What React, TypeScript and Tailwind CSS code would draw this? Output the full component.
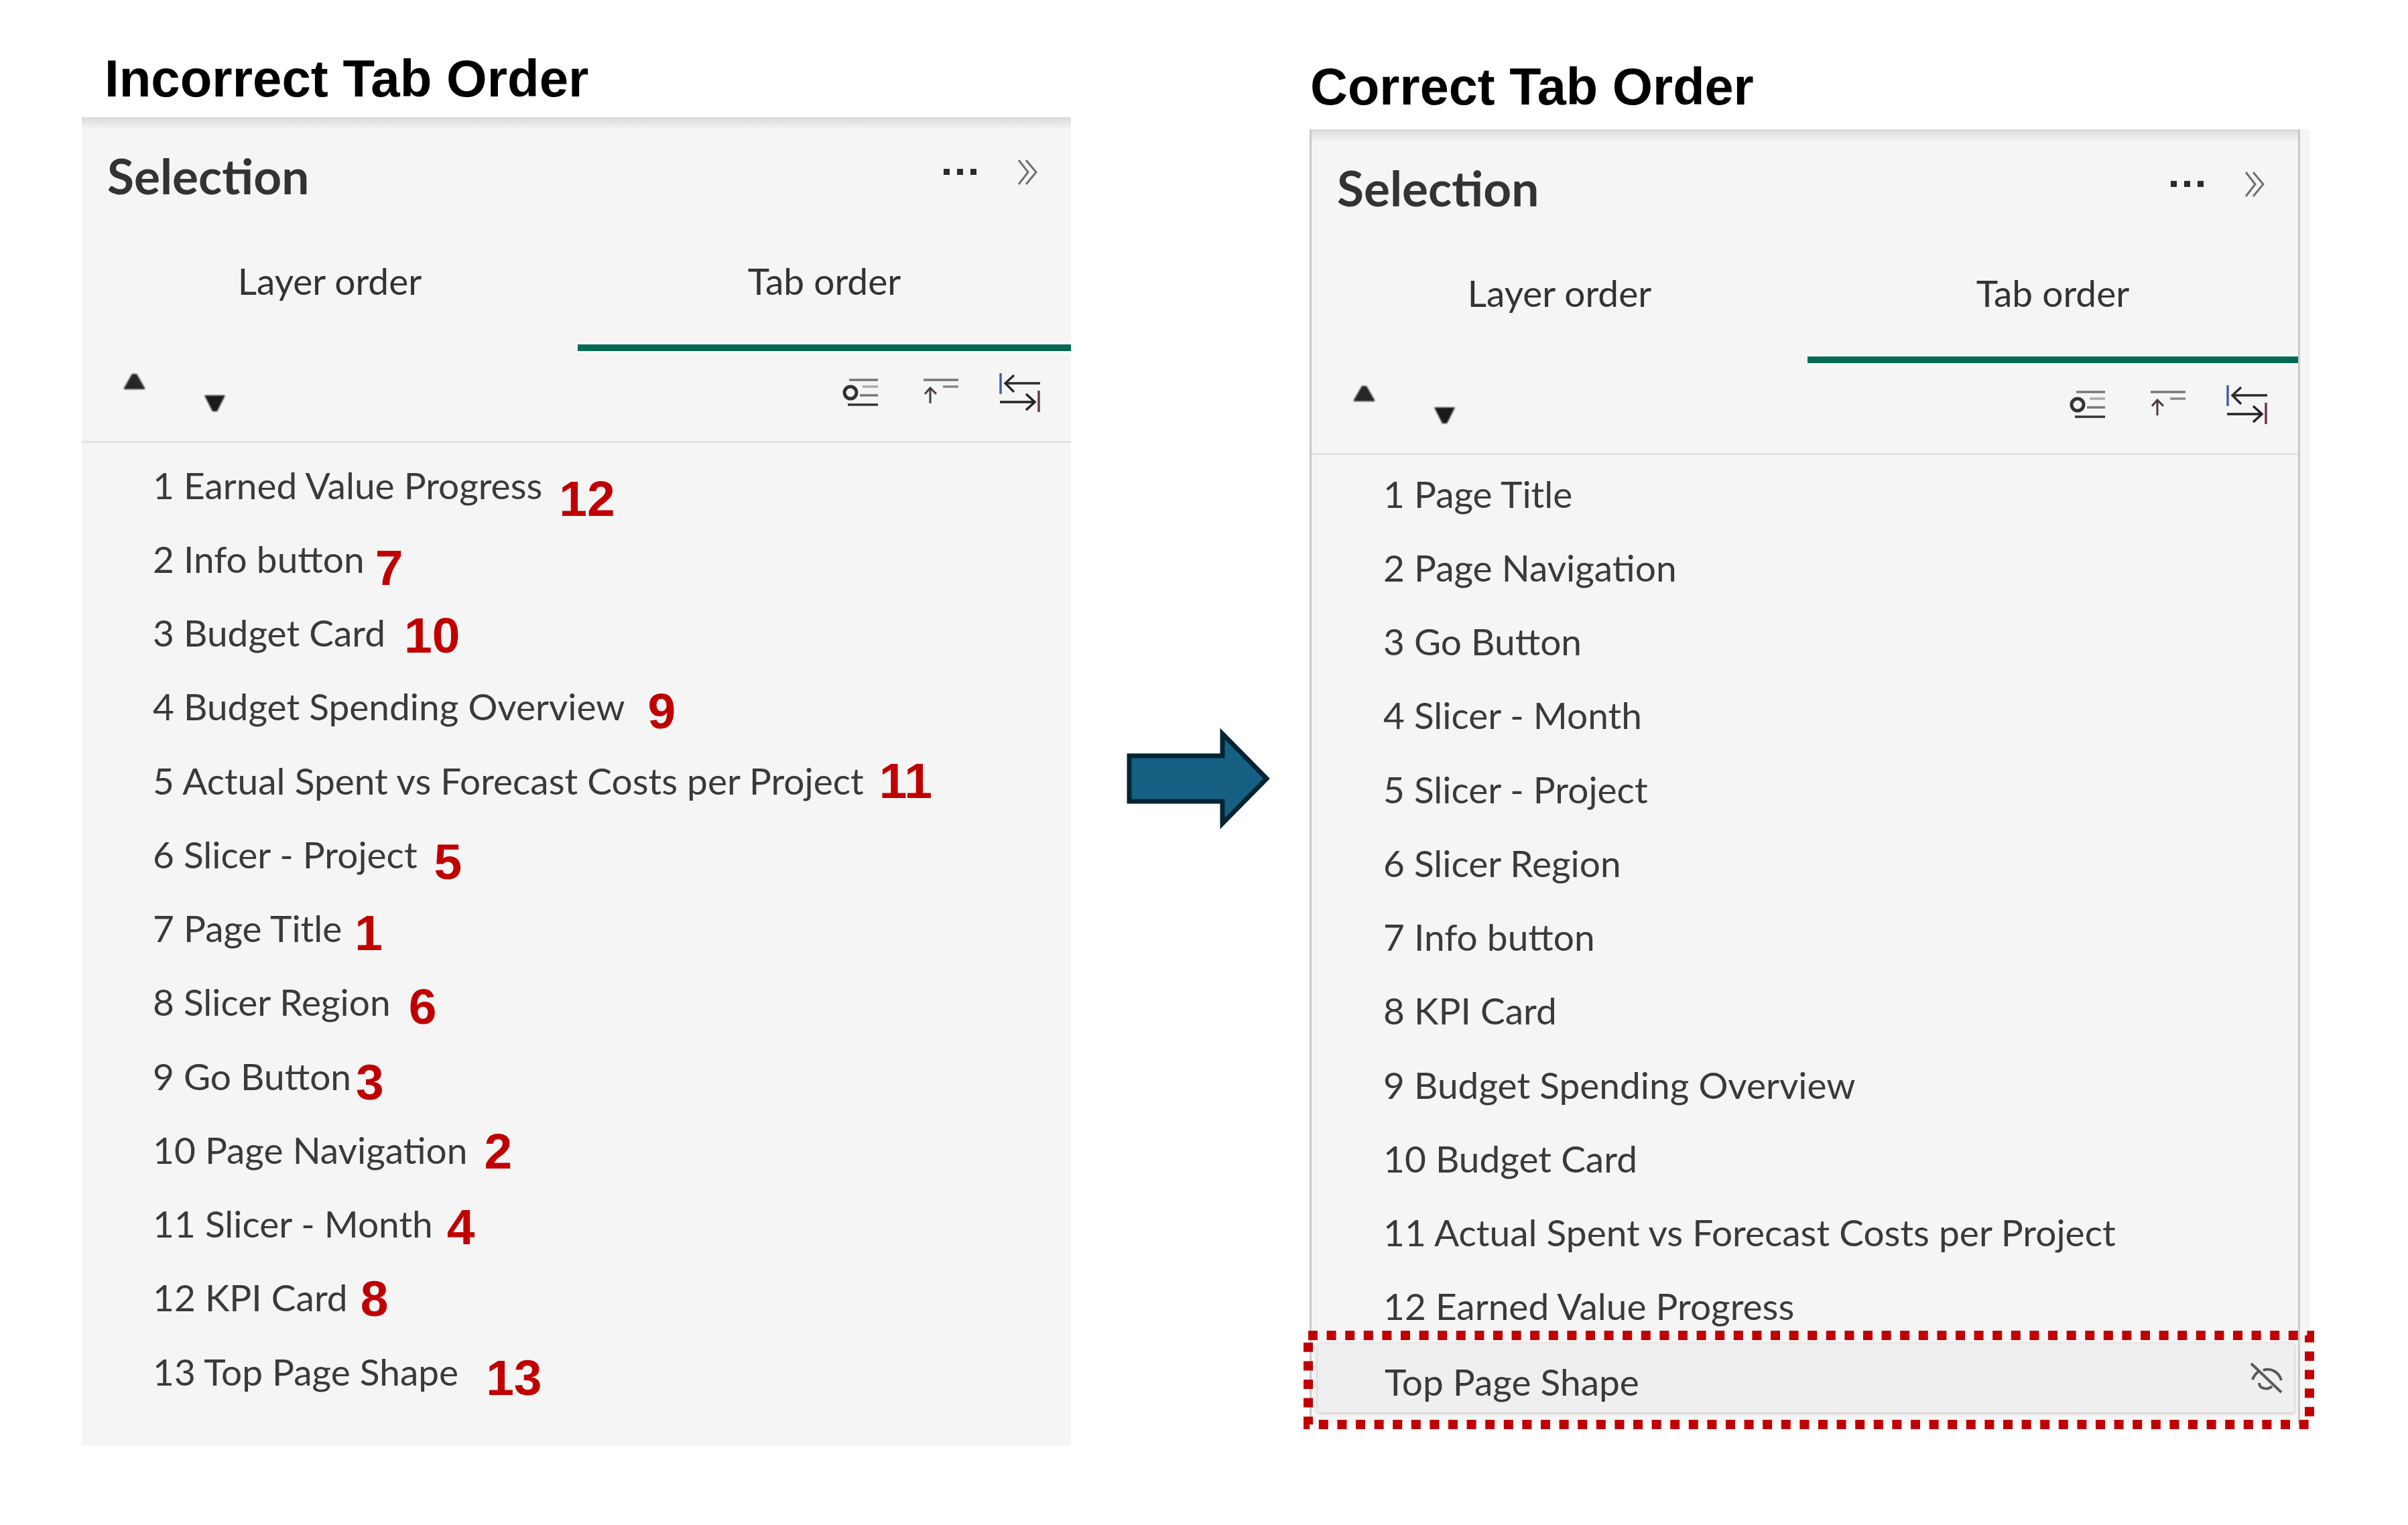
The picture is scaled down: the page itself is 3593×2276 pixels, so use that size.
const uiFont = "font-['Lato','Noto_Sans',sans-serif]";

const wrongOrder = [
  { label: '1 Earned Value Progress', tag: '12', cls: 'ml-[25px] translate-y-[20px]' },
  { label: '2 Info button', tag: '7', cls: 'ml-[16px] translate-y-[13px]' },
  { label: '3 Budget Card', tag: '10', cls: 'ml-[28px] translate-y-[4px]' },
  { label: '4 Budget Spending Overview', tag: '9', cls: 'ml-[34px] translate-y-[7px]' },
  { label: '5 Actual Spent vs Forecast Costs per Project', tag: '11', cls: 'ml-[23px] translate-y-[0px]' },
  { label: '6 Slicer - Project', tag: '5', cls: 'ml-[25px] translate-y-[11px]' },
  { label: '7 Page Title', tag: '1', cls: 'ml-[19px] translate-y-[7px]' },
  { label: '8 Slicer Region', tag: '6', cls: 'ml-[27px] translate-y-[7px]' },
  { label: '9 Go Button', tag: '3', cls: 'ml-[7px] translate-y-[9px]' },
  { label: '10 Page Navigation', tag: '2', cls: 'ml-[25px] translate-y-[2px]' },
  { label: '11 Slicer - Month', tag: '4', cls: 'ml-[21px] translate-y-[5px]' },
  { label: '12 KPI Card', tag: '8', cls: 'ml-[19px] translate-y-[2px]' },
  { label: '13 Top Page Shape', tag: '13', cls: 'ml-[41px] translate-y-[9px]' },
];

const rightOrder = [
  '1 Page Title',
  '2 Page Navigation',
  '3 Go Button',
  '4 Slicer - Month',
  '5 Slicer - Project',
  '6 Slicer Region',
  '7 Info button',
  '8 KPI Card',
  '9 Budget Spending Overview',
  '10 Budget Card',
  '11 Actual Spent vs Forecast Costs per Project',
  '12 Earned Value Progress',
];

function MoreIcon() {
  return (
    <svg width="50" height="12" viewBox="0 0 50 12" className="shrink-0">
      <rect x="1" y="1" width="9" height="9" fill="#2b2b2b" />
      <rect x="21" y="1" width="9" height="9" fill="#2b2b2b" />
      <rect x="41" y="1" width="9" height="9" fill="#2b2b2b" />
    </svg>
  );
}

function ChevronsIcon() {
  return (
    <svg width="32" height="40" viewBox="0 0 32 40" fill="none" stroke="#6f6f6f" strokeWidth="3" className="shrink-0">
      <path d="M2 2 L16 20 L2 38" />
      <path d="M13 2 L28 20 L13 38" />
    </svg>
  );
}

function ArrowButtons() {
  return (
    <div className="mt-[2px] flex items-start blur-[1px]">
      <svg width="35" height="25" viewBox="0 0 35 25" className="shrink-0">
        <path d="M14 1 H21 L33 22 Q34 24 32 24 H3 Q1 24 2 22 Z" fill="#262626" />
      </svg>
      <svg width="35" height="26" viewBox="0 0 35 26" className="ml-[85px] mt-[32px] shrink-0">
        <path d="M2 1 H33 L21 25 H14 Z" fill="#1a1a1a" />
      </svg>
    </div>
  );
}

function ToolIcons() {
  return (
    <svg width="300" height="62" viewBox="1255 555 300 62" fill="none" className="shrink-0 blur-[0.5px]">
      <circle cx="1269" cy="586" r="9" stroke="#333" strokeWidth="5" />
      <path d="M1267 567 H1310" stroke="#777" strokeWidth="3.5" />
      <path d="M1287 577 H1310" stroke="#aaa" strokeWidth="3.5" />
      <path d="M1283 590 H1310" stroke="#777" strokeWidth="3.5" />
      <path d="M1265 604 H1310" stroke="#333" strokeWidth="3.5" />
      <path d="M1378 567 H1430" stroke="#777" strokeWidth="3.5" />
      <path d="M1407 577 H1430" stroke="#888" strokeWidth="3.5" />
      <path d="M1388 602 V579 M1380 588 L1388 579 L1397 588" stroke="#4a3a40" strokeWidth="3" />
      <path d="M1493 557 V588" stroke="#3f5f9f" strokeWidth="3.5" />
      <path d="M1552 572 H1500 M1513 560 L1500 572 L1513 585" stroke="#2b2b2b" strokeWidth="3.5" />
      <path d="M1492 600 H1544 M1531 588 L1544 600 L1531 612" stroke="#222" strokeWidth="3.5" />
      <path d="M1550 583 V615" stroke="#6d3550" strokeWidth="3.5" />
    </svg>
  );
}

function PanelHeader({ tabWidth }: { tabWidth: string }) {
  return (
    <>
      <div className="h-[18px] bg-gradient-to-b from-[#d9d9d9] to-[#f5f5f5]" />
      <div className="flex h-[142px] items-center pb-[4px] pl-[38px] pr-[48px]">
        <span className="blur-[0.6px] text-[73px] leading-none font-bold text-[#333333]">Selection</span>
        <div className="ml-auto mb-[10px] flex items-center gap-[61px]">
          <MoreIcon />
          <ChevronsIcon />
        </div>
      </div>
      <div className="flex h-[189px] text-[55px] leading-none text-[#333333]">
        <div className="flex flex-1 flex-col">
          <div className="flex flex-1 items-center justify-center pb-[11px]">
            <span className="blur-[0.6px]">Layer order</span>
          </div>
          <div className="h-[10px]" />
        </div>
        <div className={`flex flex-col ${tabWidth}`}>
          <div className="flex flex-1 items-center justify-center pb-[11px]">
            <span className="blur-[0.6px]">Tab order</span>
          </div>
          <div className="h-[10px] bg-[#046a54] shadow-[0_-3px_0_#fcfcfc,0_3px_0_#fcfcfc]" />
        </div>
      </div>
      <div className="flex h-[137px] items-start border-b-[3px] border-[#e3e3e3] pl-[61px] pr-[43px] pt-[31px]">
        <ArrowButtons />
        <div className="ml-auto">
          <ToolIcons />
        </div>
      </div>
    </>
  );
}

function WrongList() {
  return (
    <div className="pt-[8px] pl-[106px] pb-[56px]">
      {wrongOrder.map((row) => (
        <div key={row.label} className="flex h-[110.25px] items-center">
          <span className="blur-[0.6px] text-[55px] leading-none text-[#3a3a3a] whitespace-nowrap">{row.label}</span>
          <span className={`font-['Liberation_Sans',sans-serif] text-[75px] leading-none font-bold text-[#c00000] ${row.cls}`}>
            {row.tag}
          </span>
        </div>
      ))}
    </div>
  );
}

function RightList() {
  return (
    <div className="pt-[3px] pl-[107px]">
      {rightOrder.map((label) => (
        <div key={label} className="flex h-[110.25px] items-center">
          <span className="blur-[0.6px] text-[55px] leading-none text-[#3a3a3a] whitespace-nowrap">{label}</span>
        </div>
      ))}
    </div>
  );
}

function HiddenRow() {
  return (
    <div className="relative ml-[9px] mr-[6px] flex h-[103px] items-center rounded-[3px] bg-[#efefef] pl-[100px] pr-[14px] pt-[11px] shadow-[0_1px_5px_rgba(0,0,0,0.25)]">
      <span className="blur-[0.6px] text-[55px] leading-none text-[#3a3a3a]">Top Page Shape</span>
      <svg width="55" height="52" viewBox="0 0 55 52" fill="none" stroke="#5a5a5a" strokeWidth="4" className="ml-auto mt-[-11px] blur-[0.6px]">
        <path d="M5 4 L50 47" />
        <path d="M7 28 C9 22 13 18 17 15" />
        <path d="M23 14 C34 10 46 16 50 29" />
        <path d="M17 33 C17 42 30 44 36 38" />
      </svg>
    </div>
  );
}

function FlowArrow() {
  return (
    <svg width="216" height="152" viewBox="0 0 216 152" className="mt-[1086px] ml-[83px] shrink-0">
      <path
        d="M4 42 H143 V9 L209 76 L143 143 V110 H4 Z"
        fill="#156082"
        stroke="#042433"
        strokeWidth="7"
      />
    </svg>
  );
}

export default function App() {
  return (
    <div className={`flex h-[2276px] w-[3593px] items-start overflow-hidden bg-white ${uiFont}`}>
      <div className="ml-[122px] w-[1476px] shrink-0">
        <div className="flex h-[175px] pl-[34px] pt-[72px]">
          <h1 className="font-['Liberation_Sans',sans-serif] text-[78px] leading-[90px] font-bold text-black">
            Incorrect Tab Order
          </h1>
        </div>
        <div className="bg-[#f5f5f5]">
          <PanelHeader tabWidth="w-[736px]" />
          <WrongList />
        </div>
      </div>

      <FlowArrow />

      <div className="relative ml-[57px] w-[1493px] shrink-0">
        <div className="flex h-[193px] pl-[1px] pt-[84px]">
          <h2 className="font-['Liberation_Sans',sans-serif] text-[77.5px] leading-[90px] font-bold text-black">
            Correct Tab Order
          </h2>
        </div>
        <div className="h-[1932px] bg-[#f5f5f5]">
          <div className="h-full w-[1478px] border-x-[3px] border-[#c9c9c9]">
            <PanelHeader tabWidth="w-[732px]" />
            <RightList />
            <HiddenRow />
          </div>
        </div>
        <svg width="1508" height="147" viewBox="0 0 1508 147" fill="none" className="absolute left-[-9px] top-[1986px]">
          <rect x="7" y="7" width="1494" height="133" stroke="#c00000" strokeWidth="14" strokeDasharray="14 13.6" />
        </svg>
      </div>
    </div>
  );
}
